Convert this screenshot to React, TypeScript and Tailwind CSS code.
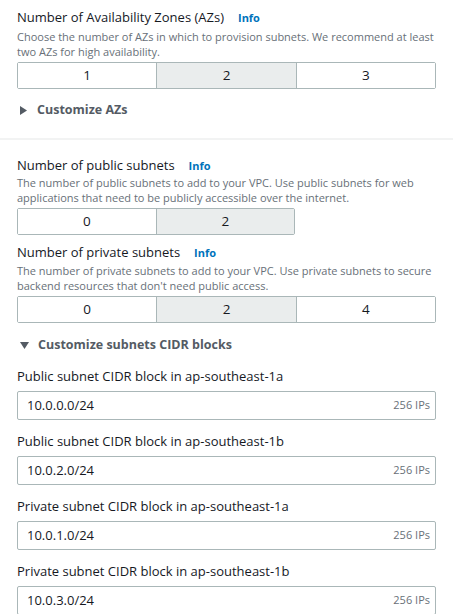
import React from 'react';

function Info() {
  return <span className="ml-[14px] text-[11px] font-bold text-[#0073bb]">Info</span>;
}

function Segmented({ options, selected, width }: { options: string[]; selected: string; width: string }) {
  return (
    <div className={`flex h-[27px] border border-[#aab7b8] rounded-[2px] ${width}`}>
      {options.map((o, i) => (
        <div
          key={o}
          className={`flex-1 flex items-center justify-center text-[13.5px] text-[#16191f] ${i > 0 ? 'border-l border-[#aab7b8]' : ''} ${o === selected ? 'bg-[#eaeded]' : 'bg-white'}`}
        >
          {o}
        </div>
      ))}
    </div>
  );
}

function CidrField({ label, value }: { label: string; value: string }) {
  return (
    <div className="mt-[11px]">
      <div className="text-[13px] leading-[20px] text-[#16191f]">{label}</div>
      <div className="mt-[5px] h-[29px] flex items-center justify-between border border-[#aab7b8] rounded-[2px] pl-[9px] pr-[5px]">
        <span className="text-[13px] text-[#16191f]">{value}</span>
        <span className="text-[11px] text-[#687078]">256 IPs</span>
      </div>
    </div>
  );
}

export default function App() {
  return (
    <div className="w-[453px] h-[614px] overflow-hidden bg-white font-['Open_Sans',sans-serif]">
      <div className="px-[17px] pt-[7px] pb-[18px]">
        <div className="flex items-baseline text-[13px] leading-[20px] text-[#16191f]">
          Number of Availability Zones (AZs)
          <Info />
        </div>
        <div className="mt-[1px] text-[11px] leading-[15px] text-[#687078]">
          Choose the number of AZs in which to provision subnets. We recommend at least two AZs for high availability.
        </div>
        <div className="mt-[3px]">
          <Segmented options={['1', '2', '3']} selected="2" width="w-full" />
        </div>
        <div className="mt-[11px] flex items-center h-[20px] text-[12.5px] font-bold text-[#545b64]">
          <svg width="7" height="9" viewBox="0 0 7 9" className="ml-[3px] mr-[10px]">
            <path d="M0 0 L7 4.5 L0 9 Z" fill="#545b64" />
          </svg>
          Customize AZs
        </div>
      </div>
      <div className="h-[2px] bg-[#f2f3f3]" />
      <div className="px-[17px] pt-[15px]">
        <div className="flex items-baseline text-[13px] leading-[20px] text-[#16191f]">
          Number of public subnets
          <Info />
        </div>
        <div className="text-[11px] leading-[14.5px] text-[#687078]">
          The number of public subnets to add to your VPC. Use public subnets for web applications that need to be publicly accessible over the internet.
        </div>
        <div className="mt-[3px]">
          <Segmented options={['0', '2']} selected="2" width="w-[278px]" />
        </div>
        <div className="mt-[7px] flex items-baseline text-[13px] leading-[20px] text-[#16191f]">
          Number of private subnets
          <Info />
        </div>
        <div className="text-[11px] leading-[15px] text-[#687078]">
          The number of private subnets to add to your VPC. Use private subnets to secure backend resources that don't need public access.
        </div>
        <div className="mt-[3px]">
          <Segmented options={['0', '2', '4']} selected="2" width="w-full" />
        </div>
        <div className="mt-[12px] flex items-center h-[20px] text-[12.5px] font-bold text-[#545b64]">
          <svg width="9" height="7" viewBox="0 0 9 7" className="ml-[3px] mr-[9px]">
            <path d="M0 0 L9 0 L4.5 7 Z" fill="#545b64" />
          </svg>
          Customize subnets CIDR blocks
        </div>
        <CidrField label="Public subnet CIDR block in ap-southeast-1a" value="10.0.0.0/24" />
        <CidrField label="Public subnet CIDR block in ap-southeast-1b" value="10.0.2.0/24" />
        <CidrField label="Private subnet CIDR block in ap-southeast-1a" value="10.0.1.0/24" />
        <CidrField label="Private subnet CIDR block in ap-southeast-1b" value="10.0.3.0/24" />
      </div>
    </div>
  );
}
